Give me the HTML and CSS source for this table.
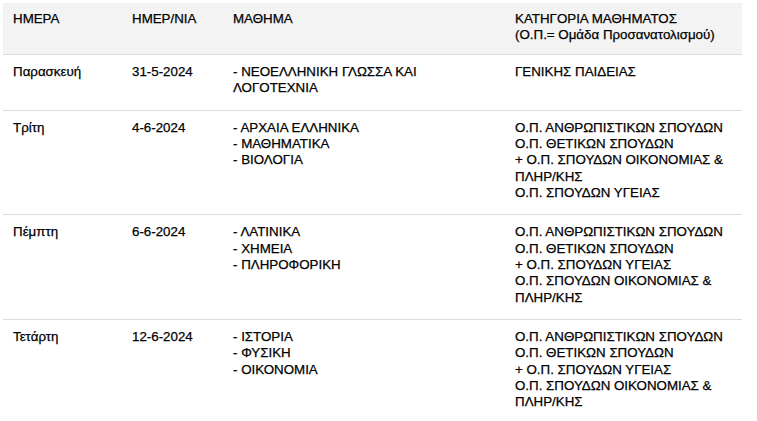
FILE: index.html
```html
<!DOCTYPE html>
<html lang="el">
<head>
<meta charset="utf-8">
<title>Πρόγραμμα εξετάσεων</title>
<link rel="stylesheet" href="styles.css">
</head>
<body>
<table class="exams">
  <colgroup>
    <col class="c-day">
    <col class="c-date">
    <col class="c-subj">
    <col class="c-cat">
  </colgroup>
  <thead>
    <tr>
      <th>ΗΜΕΡΑ</th>
      <th>ΗΜΕΡ/ΝΙΑ</th>
      <th>ΜΑΘΗΜΑ</th>
      <th>ΚΑΤΗΓΟΡΙΑ ΜΑΘΗΜΑΤΟΣ<br>(Ο.Π.= Ομάδα Προσανατολισμού)</th>
    </tr>
  </thead>
  <tbody>
    <tr>
      <td>Παρασκευή</td>
      <td>31-5-2024</td>
      <td>- ΝΕΟΕΛΛΗΝΙΚΗ ΓΛΩΣΣΑ ΚΑΙ ΛΟΓΟΤΕΧΝΙΑ</td>
      <td>ΓΕΝΙΚΗΣ ΠΑΙΔΕΙΑΣ</td>
    </tr>
    <tr>
      <td>Τρίτη</td>
      <td>4-6-2024</td>
      <td>- ΑΡΧΑΙΑ ΕΛΛΗΝΙΚΑ<br>- ΜΑΘΗΜΑΤΙΚΑ<br>- ΒΙΟΛΟΓΙΑ</td>
      <td>Ο.Π. ΑΝΘΡΩΠΙΣΤΙΚΩΝ ΣΠΟΥΔΩΝ<br>Ο.Π. ΘΕΤΙΚΩΝ ΣΠΟΥΔΩΝ<br>+ Ο.Π. ΣΠΟΥΔΩΝ ΟΙΚΟΝΟΜΙΑΣ &amp; ΠΛΗΡ/ΚΗΣ<br>Ο.Π. ΣΠΟΥΔΩΝ ΥΓΕΙΑΣ</td>
    </tr>
    <tr>
      <td>Πέμπτη</td>
      <td>6-6-2024</td>
      <td>- ΛΑΤΙΝΙΚΑ<br>- ΧΗΜΕΙΑ<br>- ΠΛΗΡΟΦΟΡΙΚΗ</td>
      <td>Ο.Π. ΑΝΘΡΩΠΙΣΤΙΚΩΝ ΣΠΟΥΔΩΝ<br>Ο.Π. ΘΕΤΙΚΩΝ ΣΠΟΥΔΩΝ<br>+ Ο.Π. ΣΠΟΥΔΩΝ ΥΓΕΙΑΣ<br>Ο.Π. ΣΠΟΥΔΩΝ ΟΙΚΟΝΟΜΙΑΣ &amp; ΠΛΗΡ/ΚΗΣ</td>
    </tr>
    <tr>
      <td>Τετάρτη</td>
      <td>12-6-2024</td>
      <td>- ΙΣΤΟΡΙΑ<br>- ΦΥΣΙΚΗ<br>- ΟΙΚΟΝΟΜΙΑ</td>
      <td>Ο.Π. ΑΝΘΡΩΠΙΣΤΙΚΩΝ ΣΠΟΥΔΩΝ<br>Ο.Π. ΘΕΤΙΚΩΝ ΣΠΟΥΔΩΝ<br>+ Ο.Π. ΣΠΟΥΔΩΝ ΥΓΕΙΑΣ<br>Ο.Π. ΣΠΟΥΔΩΝ ΟΙΚΟΝΟΜΙΑΣ &amp; ΠΛΗΡ/ΚΗΣ</td>
    </tr>
  </tbody>
</table>
</body>
</html>
```

FILE: styles.css
```css
html, body {
  margin: 0;
  padding: 0;
  background: #fff;
}
body {
  padding: 3px;
  font-family: "Liberation Sans", Arial, sans-serif;
  font-size: 13.33px;
  line-height: 16.33px;
  color: #000;
  -webkit-text-stroke: 0.25px #000;
}
.exams {
  width: 739px;
  border-collapse: collapse;
  table-layout: fixed;
}
.c-day { width: 119px; }
.c-date { width: 101px; }
.c-subj { width: 282px; }
.c-cat { width: 237px; }
.exams th,
.exams td {
  text-align: left;
  vertical-align: top;
  font-weight: normal;
  padding: 9px 10px 13px;
  border-bottom: 1px solid #dcdcdc;
}
.exams thead th {
  background: #f3f3f3;
  padding-top: 8px;
  padding-bottom: 10.5px;
}
.exams td:nth-child(4) {
  padding-right: 14px;
}
```
